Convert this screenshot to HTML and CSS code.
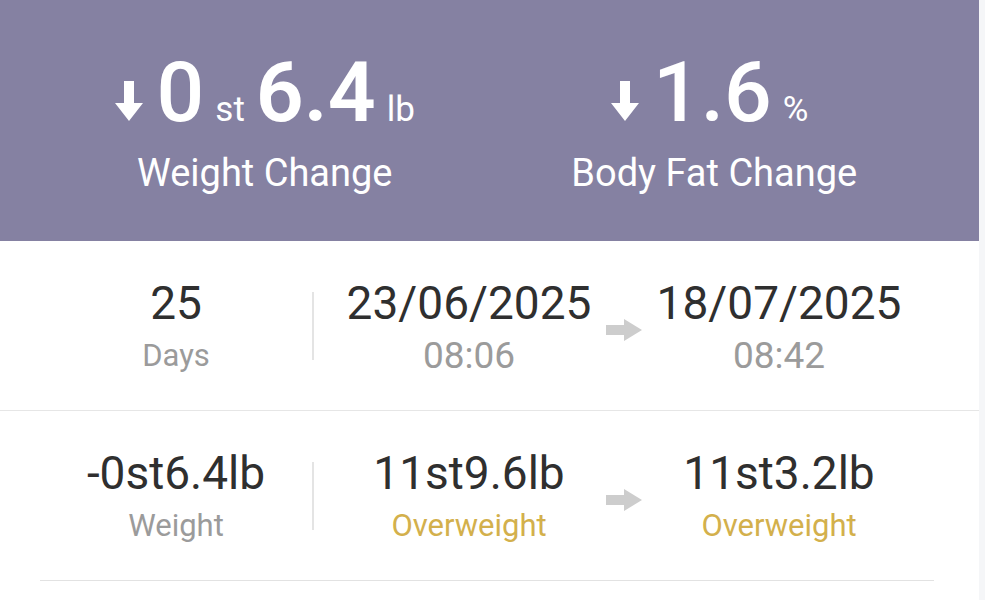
FILE: index.html
```html
<!doctype html>
<html>
  <head>
    <title>Progress</title>
    <link rel="stylesheet" href="styles.css">
  </head>
  <body>
    <div id='page'>
      <div id='summary'>
        <div class='stat'>
          <div class='figure'>
            <svg class='down' width='28' height='40' viewBox='0 0 28 40'><path d='M9 0h10v22h9L14 40 0 22h9z' fill='#fff'/></svg>
            <span class='num light'>0</span><span class='unit'>st</span><span class='num'>6.4</span><span class='unit'>lb</span>
          </div>
          <div class='caption'>Weight Change</div>
        </div>
        <div class='stat'>
          <div class='figure'>
            <svg class='down' width='28' height='40' viewBox='0 0 28 40'><path d='M9 0h10v22h9L14 40 0 22h9z' fill='#fff'/></svg>
            <span class='num light'>1.6</span><span class='unit pct'>%</span>
          </div>
          <div class='caption'>Body Fat Change</div>
        </div>
      </div>

      <div class='row full'>
        <div class='first'>
          <div class='value'>25</div>
          <div class='label'>Days</div>
        </div>
        <div class='vline'></div>
        <div class='cell'>
          <div class='value'>23/06/2025</div>
          <div class='label time'>08:06</div>
        </div>
        <div class='step'>
          <svg width='36' height='22' viewBox='0 0 36 22'><path d='M0 6h18V0l18 11-18 11v-6H0z' fill='#cdcdcd'/></svg>
        </div>
        <div class='cell'>
          <div class='value'>18/07/2025</div>
          <div class='label time'>08:42</div>
        </div>
      </div>

      <div class='row inset'>
        <div class='first'>
          <div class='value'>-0st6.4lb</div>
          <div class='label'>Weight</div>
        </div>
        <div class='vline'></div>
        <div class='cell'>
          <div class='value'>11st9.6lb</div>
          <div class='label warn'>Overweight</div>
        </div>
        <div class='step'>
          <svg width='36' height='22' viewBox='0 0 36 22'><path d='M0 6h18V0l18 11-18 11v-6H0z' fill='#cdcdcd'/></svg>
        </div>
        <div class='cell'>
          <div class='value'>11st3.2lb</div>
          <div class='label warn'>Overweight</div>
        </div>
      </div>
    </div>
    <div id='edge'></div>
  </body>
</html>
```

FILE: styles.css
```css
body {
  margin:             0;
  display:            flex;
  min-height:         600px;
  background-color:   #f5f6f8;
  font-family:        Roboto, "Liberation Sans", sans-serif;
}
#page {
  width:              979px;
  background-color:   #fff;
}
#edge {
  flex:               1;
}
#summary {
  box-sizing:         border-box;
  height:             241px;
  padding:            51px 40px 0;
  display:            flex;
  background-color:   #8581a2;
  color:              #fff;
}
.stat {
  flex:               1;
  text-align:         center;
}
.figure {
  display:            flex;
  justify-content:    center;
  align-items:        baseline;
  height:             84px;
  line-height:        84px;
}
.down {
  flex-shrink:        0;
  margin:             0 14px 4px 0;
}
.num {
  font-size:          84px;
  font-weight:        600;
}
.num.light {
  font-weight:        500;
}
.unit {
  font-size:          35px;
  margin:             0 11px;
}
.unit:last-child {
  margin-right:       0;
}
.unit.pct {
  margin-right:       9px;
}
.caption {
  margin-top:         16px;
  font-size:          38px;
  line-height:        44px;
}
.row {
  display:            flex;
  align-items:        center;
  padding:            35px 0 34px;
}
.row.full {
  padding-left:       40px;
  padding-right:      45px;
  border-bottom:      1px solid #e6e6e6;
}
.row.inset {
  margin:             0 45px 0 40px;
  border-bottom:      1px solid #e2e2e2;
}
.first {
  width:              272px;
  text-align:         center;
}
.vline {
  width:              2px;
  height:             68px;
  background-color:   #e4e4e4;
}
.cell {
  flex:               1;
  text-align:         center;
}
.step {
  width:              0;
  display:            flex;
  justify-content:    center;
  margin-top:         8px;
}
.step svg {
  flex-shrink:        0;
}
.value {
  font-size:          46px;
  line-height:        54px;
  color:              #2f2f2f;
}
.label {
  margin-top:         6px;
  font-size:          31px;
  line-height:        40px;
  color:              #9b9b9b;
}
.label.time {
  font-size:          37px;
}
.label.warn {
  color:              #d3b04c;
}
```
